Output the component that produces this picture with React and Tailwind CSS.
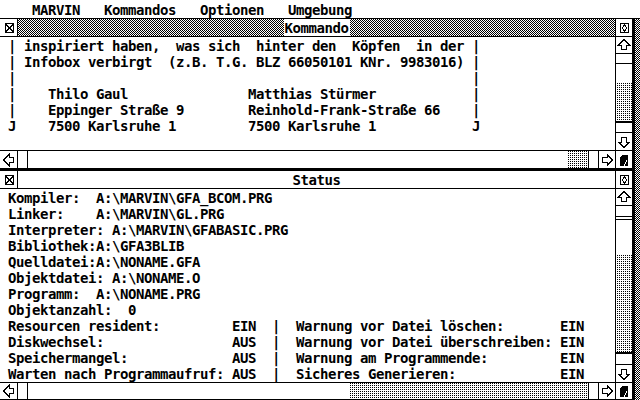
import React from "react";

const FONT = "font-['DejaVu_Sans_Mono',monospace] font-bold text-[14px] tracking-[-0.43px] leading-[16px]";

function line(parts) {
  let s = "";
  for (const [c, t] of parts) s = s.padEnd(c, " ") + t;
  return s;
}

const topRows = [
  line([[1, "| inspiriert haben,  was sich  hinter den  Köpfen  in der |"]]),
  line([[1, "| Infobox verbirgt  (z.B. T.G. BLZ 66050101 KNr. 9983016) |"]]),
  line([[1, "|"], [59, "|"]]),
  line([[1, "|"], [6, "Thilo Gaul"], [31, "Matthias Stürmer"], [59, "|"]]),
  line([[1, "|"], [6, "Eppinger Straße 9"], [31, "Reinhold-Frank-Straße 66"], [59, "|"]]),
  line([[1, "J"], [6, "7500 Karlsruhe 1"], [31, "7500 Karlsruhe 1"], [59, "J"]]),
];

const statusRows = [
  line([[1, "Kompiler:"], [12, "A:\\MARVIN\\GFA_BCOM.PRG"]]),
  line([[1, "Linker:"], [12, "A:\\MARVIN\\GL.PRG"]]),
  line([[1, "Interpreter: A:\\MARVIN\\GFABASIC.PRG"]]),
  line([[1, "Bibliothek:A:\\GFA3BLIB"]]),
  line([[1, "Quelldatei:"], [12, "A:\\NONAME.GFA"]]),
  line([[1, "Objektdatei: A:\\NONAME.O"]]),
  line([[1, "Programm:"], [12, "A:\\NONAME.PRG"]]),
  line([[1, "Objektanzahl:  0"]]),
  line([[1, "Resourcen resident:"], [29, "EIN"], [34, "|"], [37, "Warnung vor Datei löschen:"], [70, "EIN"]]),
  line([[1, "Diskwechsel:"], [29, "AUS"], [34, "|"], [37, "Warnung vor Datei überschreiben:"], [70, "EIN"]]),
  line([[1, "Speichermangel:"], [29, "AUS"], [34, "|"], [37, "Warnung am Programmende:"], [70, "EIN"]]),
  line([[1, "Warten nach Programmaufruf:"], [29, "AUS"], [34, "|"], [37, "Sicheres Generieren:"], [70, "EIN"]]),
];

const DOTS = "bg-[conic-gradient(#000_0_25%,#fff_0)] bg-[length:2px_2px]";
const CHECK = "bg-[repeating-conic-gradient(#000_0_25%,#fff_0_50%)] bg-[length:2px_2px]";

function Arrow({ rot = "" }) {
  return (
    <svg width="16" height="16" viewBox="0 0 16 16" className={rot} shapeRendering="crispEdges">
      <polygon points="8,2.5 13.5,8 10.5,8 10.5,12.5 5.5,12.5 5.5,8 2.5,8" fill="#fff" stroke="#000" strokeWidth="1" />
    </svg>
  );
}

function CloseIcon() {
  return (
    <svg width="16" height="16" viewBox="0 0 16 16" shapeRendering="crispEdges">
      <rect x="4.5" y="3.5" width="8" height="9" fill="#fff" stroke="#000" />
      <path d="M5 4 L12 12 M12 4 L5 12" stroke="#000" strokeWidth="1.5" />
    </svg>
  );
}

function FullIcon() {
  return (
    <svg width="16" height="16" viewBox="0 0 16 16" shapeRendering="crispEdges">
      <rect x="4.5" y="3.5" width="8" height="9" fill="#fff" stroke="#000" />
      <polygon points="8.5,5 11,8 8.5,11 6,8" fill="#fff" stroke="#000" strokeWidth="1" />
    </svg>
  );
}

function SizeIcon() {
  return (
    <svg width="16" height="16" viewBox="0 0 16 16" shapeRendering="crispEdges">
      <polygon points="6,3 12,3 12,14 4,14 4,6" fill="#000" />
      <path d="M11 8 L8 14" stroke="#fff" strokeWidth="1.2" />
    </svg>
  );
}

function Cell({ className = "", children }) {
  return <div className={"flex items-center justify-center " + className}>{children}</div>;
}

function TitleBar({ title, active }) {
  return (
    <div className="h-[18px] border-b border-black flex">
      <Cell className="w-[18px] border-r border-black">
        <CloseIcon />
      </Cell>
      <div className={"flex-1 flex justify-center items-center " + (active ? CHECK : "")}>
        <span className="bg-white px-[1px] pt-[1px] leading-[16px]">{title}</span>
      </div>
      <Cell className="w-[17px] border-l border-black">
        <FullIcon />
      </Cell>
    </div>
  );
}

function HScroll({ white, dotted, bottom }) {
  return (
    <div className={"h-[18px] border-t border-black flex " + (bottom ? "border-b" : "")}>
      <Cell className="w-[18px] border-r border-black">
        <Arrow rot="-rotate-90" />
      </Cell>
      <div className="w-[10px] border-r border-black" />
      <div className={white} />
      <div className={dotted + " border-r border-black " + DOTS} />
      <div className="w-[10px] border-r border-black" />
      <Cell className="w-[17px] border-r border-black">
        <Arrow rot="rotate-90" />
      </Cell>
      <Cell className="w-[16px]">
        <SizeIcon />
      </Cell>
    </div>
  );
}

export default function App() {
  return (
    <div className={"w-[640px] h-[400px] bg-white text-black overflow-hidden flex flex-col " + FONT}>
      <div className="h-[19px] border-b border-black flex items-center pt-[2px]">
        <span className="whitespace-pre">{"    MARVIN   Kommandos   Optionen   Umgebung"}</span>
      </div>
      <div className="flex flex-1 min-h-0">
        <div className="w-[633px] border-r border-black flex flex-col">
          {/* Top window */}
          <TitleBar title="Kommando" active />
          <div className="h-[113px] flex">
            <div className="flex-1 whitespace-pre pt-[1px]">
              {topRows.map((r, i) => (
                <div key={i} className="h-[16px]">{r}</div>
              ))}
            </div>
            <div className="w-[17px] border-l border-black flex flex-col">
              <Cell className="h-[17px] border-b border-black">
                <Arrow />
              </Cell>
              <div className="h-[10px] border-b border-black" />
              <div className="h-[19px]" />
              <div className={"h-[40px] border-b-2 border-black " + DOTS} />
              <div className="h-[10px] border-b border-black" />
              <Cell className="h-[17px]">
                <Arrow rot="rotate-180" />
              </Cell>
            </div>
          </div>
          <HScroll white="w-[539px]" dotted="w-[22px]" />
          <div className="h-[3px] bg-black" />
          {/* Bottom window */}
          <TitleBar title="Status" />
          <div className="h-[193px] flex">
            <div className="flex-1 whitespace-pre pt-[1px]">
              {statusRows.map((r, i) => (
                <div key={i} className="h-[16px]">{r}</div>
              ))}
            </div>
            <div className="w-[17px] border-l border-black flex flex-col">
              <Cell className="h-[17px] border-b border-black">
                <Arrow />
              </Cell>
              <div className="h-[11px] border-b border-black" />
              <div className="h-[2px]" />
              <div className="h-[36px] border-t border-black" />
              <div className={"h-[99px] border-b-2 border-black " + DOTS} />
              <div className="h-[11px] border-b border-black" />
              <Cell className="h-[17px]">
                <Arrow rot="rotate-180" />
              </Cell>
            </div>
          </div>
          <HScroll white="w-[321px]" dotted="w-[240px]" bottom />
        </div>
        <div className="w-[2px] bg-black" />
        <div className={"flex-1 " + CHECK} />
      </div>
    </div>
  );
}
